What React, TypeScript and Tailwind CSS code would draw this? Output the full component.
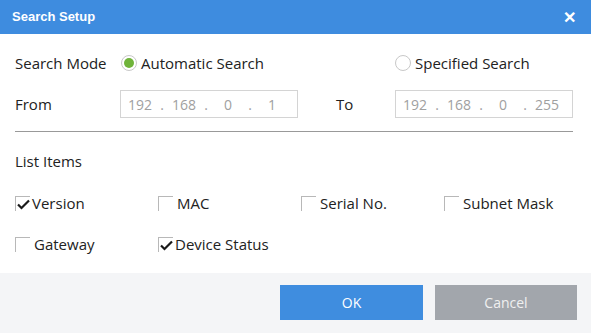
const font = { fontFamily: '"Open Sans", "Noto Sans", sans-serif' };

function IpBox({ parts }: { parts: string[] }) {
  return (
    <div className="flex items-center w-[178px] h-[28px] border border-[#d4d4d4] text-[14px] text-[#a0a0a0]">
      {parts.map((p, i) => (
        <div key={i} className="flex items-center">
          <span className="w-[38px] text-center">{p}</span>
          {i < 3 && <span className="w-[6px] text-center">.</span>}
        </div>
      ))}
    </div>
  );
}

function Radio({ checked, label }: { checked: boolean; label: string }) {
  return (
    <div className="flex items-center">
      <span className="w-[16px] h-[16px] rounded-full border border-[#c8c8c8] flex items-center justify-center mr-[4px]">
        {checked && <span className="w-[10px] h-[10px] rounded-full bg-[#6fb33a]" />}
      </span>
      <span>{label}</span>
    </div>
  );
}

function Check({ checked, label }: { checked: boolean; label: string }) {
  return (
    <div className="flex items-center w-[143px] shrink-0">
      <span className="relative w-[15px] h-[15px] border-t border-l border-[#b8b8b8] mr-[2px]">
        {checked && (
          <svg className="absolute left-[1px] top-[2px]" width="13" height="11" viewBox="0 0 13 11">
            <path d="M1 5.5 L4.5 9 L12 1.5" stroke="#1a1a1a" strokeWidth="2.2" fill="none" />
          </svg>
        )}
      </span>
      <span className={checked ? "" : "ml-[2px]"}>{label}</span>
    </div>
  );
}

export default function App() {
  return (
    <div className="w-[591px] h-[333px] bg-white flex flex-col text-[#222] text-[15px]" style={font}>
      <div className="h-[34px] bg-[#3e8cdf] flex items-center justify-between px-3 text-white">
        <span className="font-bold text-[13px]" style={{ fontFamily: '"Liberation Sans", Arial, sans-serif' }}>
          Search Setup
        </span>
        <span className="font-bold text-[16px] mr-[3px]">✕</span>
      </div>

      <div className="flex-1 px-[15px] pt-[15px]">
        <div className="flex items-center h-[28px]">
          <span className="w-[106px]">Search Mode</span>
          <div className="w-[274px]">
            <Radio checked label="Automatic Search" />
          </div>
          <Radio checked={false} label="Specified Search" />
        </div>
        <div className="flex items-center mt-[13px]">
          <span className="w-[105px]">From</span>
          <IpBox parts={["192", "168", "0", "1"]} />
          <span className="w-[97px] pl-[38px]">To</span>
          <IpBox parts={["192", "168", "0", "255"]} />
        </div>
        <div className="h-px bg-[#999] mt-[13px] mr-[3px]" />
        <div className="mt-[18px]">List Items</div>
        <div className="flex mt-[21px] h-[20px] items-center">
          <Check checked label="Version" />
          <Check checked={false} label="MAC" />
          <Check checked={false} label="Serial No." />
          <Check checked={false} label="Subnet Mask" />
        </div>
        <div className="flex mt-[21px] h-[20px] items-center">
          <Check checked={false} label="Gateway" />
          <Check checked label="Device Status" />
        </div>
      </div>

      <div className="h-[60px] bg-[#f4f5f7] flex items-center justify-end gap-[12px] pr-[14px] pb-[2px]">
        <button className="w-[143px] h-[35px] bg-[#3f8ddf] text-white text-[14px]">OK</button>
        <button className="w-[142px] h-[35px] bg-[#a2a6ac] text-[#f0f0f0] text-[14px]">Cancel</button>
      </div>
    </div>
  );
}
